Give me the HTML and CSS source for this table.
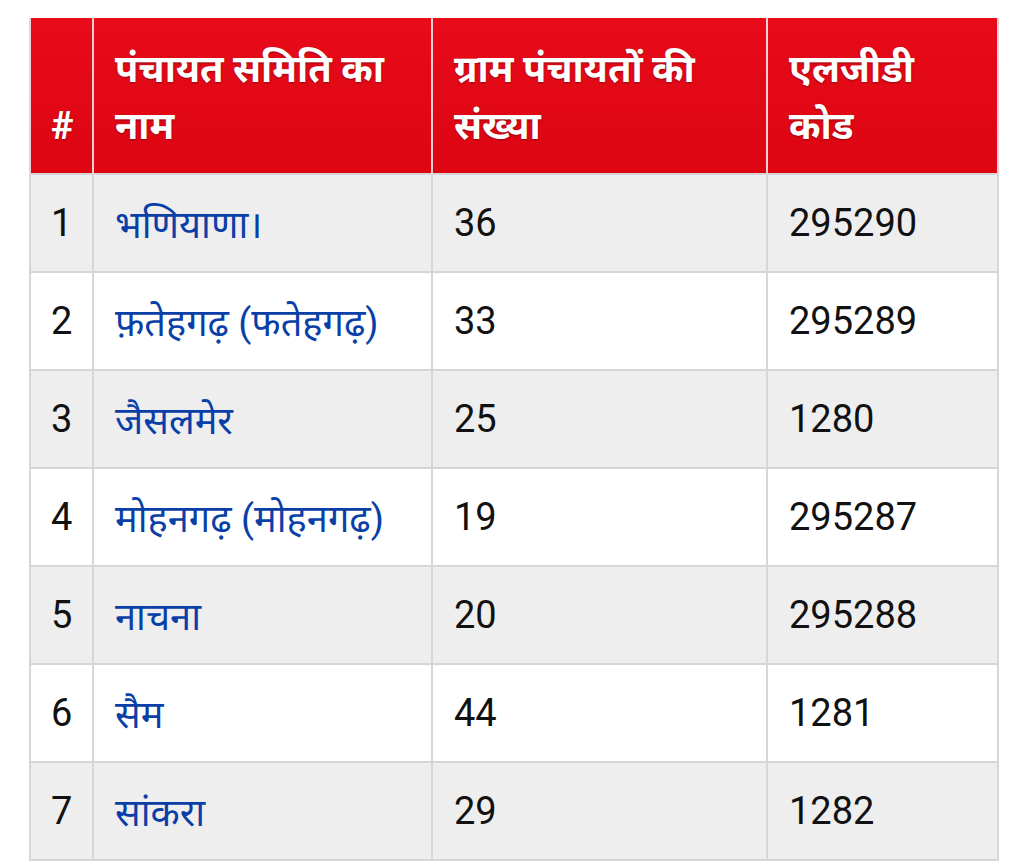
FILE: index.html
```html
<!DOCTYPE html>
<html lang="hi">
<head>
<meta charset="utf-8">
<link rel="stylesheet" href="styles.css">
</head>
<body>
<table class="tbl">
  <thead>
    <tr>
      <th class="c-num">#</th>
      <th class="c-name">पंचायत समिति का नाम</th>
      <th class="c-count">ग्राम पंचायतों की संख्या</th>
      <th class="c-code">एलजीडी कोड</th>
    </tr>
  </thead>
  <tbody>
    <tr><td>1</td><td><a href="#">भणियाणा।</a></td><td>36</td><td>295290</td></tr>
    <tr><td>2</td><td><a href="#">फ़तेहगढ़ (फतेहगढ़)</a></td><td>33</td><td>295289</td></tr>
    <tr><td>3</td><td><a href="#">जैसलमेर</a></td><td>25</td><td>1280</td></tr>
    <tr><td>4</td><td><a href="#">मोहनगढ़ (मोहनगढ़)</a></td><td>19</td><td>295287</td></tr>
    <tr><td>5</td><td><a href="#">नाचना</a></td><td>20</td><td>295288</td></tr>
    <tr><td>6</td><td><a href="#">सैम</a></td><td>44</td><td>1281</td></tr>
    <tr><td>7</td><td><a href="#">सांकरा</a></td><td>29</td><td>1282</td></tr>
  </tbody>
</table>
</body>
</html>
```
FILE: styles.css
```css
html, body {
  margin: 0;
  padding: 0;
  background: #ffffff;
}
body {
  padding: 18px 0 0 29px;
  font-family: Roboto, "Noto Sans", "Noto Sans Devanagari", sans-serif;
}
.tbl {
  border-collapse: collapse;
  width: 968px;
  table-layout: fixed;
}
.tbl th, .tbl td {
  border: 2px solid #d4d6da;
  text-align: left;
}
.tbl th {
  background: linear-gradient(#e80b1a, #dd0512);
  color: #ffffff;
  font-weight: 700;
  font-size: 38px;
  line-height: 57px;
  height: 156px;
  box-sizing: border-box;
  padding: 16px 18px 18px 21px;
  vertical-align: bottom;
  text-shadow: 0 1px 2px rgba(0,0,0,0.35);
  border-color: #f0d0d2;
  border-top: none;
  border-bottom: none;
}
.tbl th.c-num { width: 63px; padding-left: 20px; padding-right: 0; }
.tbl th.c-name { width: 339px; }
.tbl th.c-count { width: 335px; }
.tbl th.c-code { width: 231px; }
.tbl td {
  height: 98px;
  box-sizing: border-box;
  padding: 0 20px 0 21px;
  font-size: 38px;
  color: #111111;
  vertical-align: middle;
}
.tbl td:first-child { padding-left: 20px; padding-right: 0; }
.tbl tbody tr:nth-child(odd) td { background: #eeeeef; }
.tbl tbody tr:nth-child(even) td { background: #ffffff; }
.tbl a {
  color: #0a3fa8;
  text-decoration: none;
}
```
